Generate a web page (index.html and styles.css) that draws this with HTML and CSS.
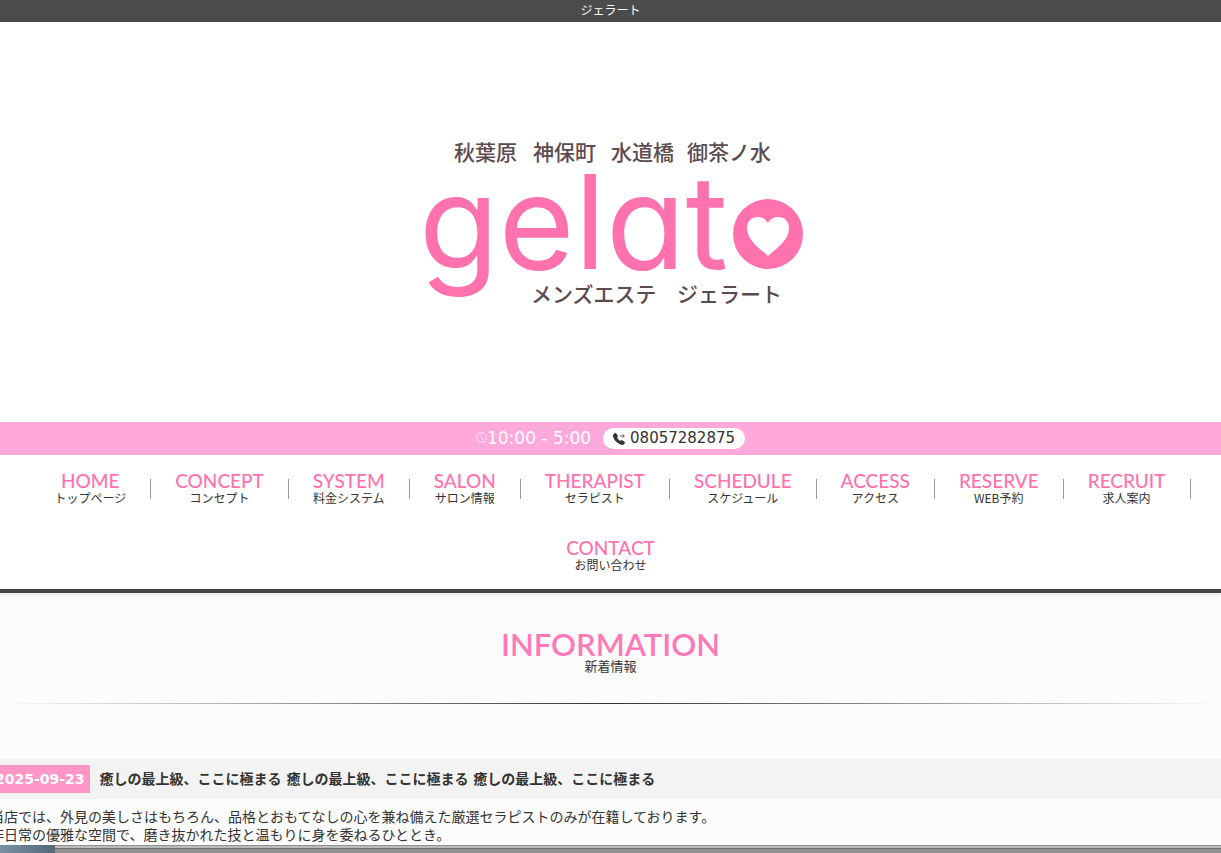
FILE: index.html
```html
<!DOCTYPE html>
<html lang="ja">
<head>
  <meta charset="UTF-8">
  <meta name="viewport" content="width=device-width, initial-scale=1">
  <title>ジェラート</title>
  <link rel="stylesheet" href="styles.css">
</head>
<body>
  <h1 class="site-title">ジェラート</h1>

  <header class="hero">
    <svg class="logo" width="400" height="200" viewBox="0 0 400 200">
      <g class="logo-ja">
        <text x="43" y="38">秋葉原</text>
        <text x="122" y="38">神保町</text>
        <text x="200" y="38">水道橋</text>
        <text x="276" y="38">御茶ノ水</text>
        <text x="120" y="180">メンズエステ</text>
        <text x="266" y="180">ジェラート</text>
      </g>
      <text class="logo-en" x="8" y="147">gelat</text>
      <circle cx="357" cy="112" r="35" fill="#ff72ae"/>
      <path d="M357 134C348 126 336 118 336 106C336 94 351 91 357 101C363 91 378 94 378 106C378 118 366 126 357 134Z" fill="#fff"/>
    </svg>
  </header>

  <div class="tel-bar">
    <span class="hours">
      <svg width="11" height="11" viewBox="0 0 16 16" fill="none" stroke="#fff"><circle cx="8" cy="8" r="7"/><path d="M8 3.5V9l3.5 2"/></svg>10:00 - 5:00
    </span>
    <a class="tel" href="tel:08057282875">
      <svg width="12" height="12" viewBox="0 0 16 16"><path d="M1.9.5a1.7 1.7 0 0 1 2.6.2L6 3c.3.5.4 1 .3 1.5l-.5 2c-.1.3 0 .5.2.7l2.8 2.8c.2.2.4.3.7.2l2-.5c.5-.1 1 0 1.5.3l2.3 1.5c.8.6.8 1.7.2 2.6l-1 1c-.8.8-1.9 1.1-3 .8C8.7 15 6 13.300 4 11.300S.8 6.800.1 4.500C-.3 3.400 0 2.300.8 1.500z"/><path d="M9 4h6M12.500 1.500L15 4l-2.500 2.500" fill="none" stroke="#333"/></svg>
      08057282875
    </a>
  </div>

  <nav class="gnav">
    <ul>
      <li><a href="#">HOME<span>トップページ</span></a></li>
      <li><a href="#">CONCEPT<span>コンセプト</span></a></li>
      <li><a href="#">SYSTEM<span>料金システム</span></a></li>
      <li><a href="#">SALON<span>サロン情報</span></a></li>
      <li><a href="#">THERAPIST<span>セラピスト</span></a></li>
      <li><a href="#">SCHEDULE<span>スケジュール</span></a></li>
      <li><a href="#">ACCESS<span>アクセス</span></a></li>
      <li><a href="#">RESERVE<span>WEB予約</span></a></li>
      <li><a href="#">RECRUIT<span>求人案内</span></a></li>
      <li><a href="#">CONTACT<span>お問い合わせ</span></a></li>
    </ul>
  </nav>

  <main>
    <h2 class="section-title">INFORMATION<span>新着情報</span></h2>
    <article class="news">
      <h3 class="news-head"><time datetime="2025-09-23">2025-09-23</time>癒しの最上級、ここに極まる 癒しの最上級、ここに極まる 癒しの最上級、ここに極まる</h3>
      <p>当店では、外見の美しさはもちろん、品格とおもてなしの心を兼ね備えた厳選セラピストのみが在籍しております。<br>非日常の優雅な空間で、磨き抜かれた技と温もりに身を委ねるひととき。</p>
      <div class="photo"><div class="photo-panel"></div></div>
    </article>
  </main>
</body>
</html>
```
FILE: styles.css
```css
* { box-sizing: border-box; }
body {
  margin: 0;
  background: #fcfcfc;
  color: #333;
  font-family: "DejaVu Sans", "Noto Sans CJK JP", sans-serif;
  font-size: 14px;
  line-height: 18px;
  overflow: hidden;
}
ul, h1, h2, h3, p { margin: 0; padding: 0; }
a { color: inherit; text-decoration: none; }

.site-title {
  background: #4b4b4b;
  color: #fff;
  font-size: 12px;
  font-weight: normal;
  line-height: 22px;
  text-align: center;
}

/* logo */
.hero {
  display: flex;
  justify-content: center;
  padding: 100px 0;
  background: #fff;
}
.logo-ja {
  font-family: "Noto Sans CJK JP", sans-serif;
  font-size: 21px;
  font-weight: 500;
  fill: #5c4b50;
}
.logo-en {
  font-family: Inter, sans-serif;
  font-size: 130px;
  font-feature-settings: "cv11";
  fill: #ff72ae;
}

/* hours and phone */
.tel-bar {
  display: flex;
  justify-content: center;
  align-items: center;
  gap: 12px;
  height: 33px;
  background: #ffa8dc;
}
.hours {
  display: flex;
  align-items: center;
  padding-bottom: 2px;
  color: #fff;
  font-size: 17px;
}
.tel {
  display: flex;
  align-items: center;
  gap: 5px;
  padding: 0 10px;
  border-radius: 11px;
  background: #fff;
  font-size: 15px;
  line-height: 21px;
}
.tel svg { fill: #333; }

/* navigation */
.gnav {
  background: #fff;
  border-bottom: 4px solid #444;
  box-shadow: 0 2px 4px rgba(0,0,0,0.1);
}
.gnav ul {
  display: flex;
  flex-wrap: wrap;
  justify-content: center;
  list-style: none;
}
.gnav li { display: flex; align-items: center; height: 67px; }
.gnav li:not(:last-child)::after {
  content: "";
  width: 1px;
  height: 20px;
  background: #999;
}
.gnav a {
  padding: 0 24px;
  color: #ff72ae;
  font-family: Lato, sans-serif;
  font-size: 19px;
  font-weight: 500;
  line-height: 18px;
  text-align: center;
}
.gnav span, .section-title span {
  display: block;
  color: #333;
  font-family: "Noto Sans CJK JP", sans-serif;
  font-size: 12px;
  font-weight: 400;
  line-height: 16px;
}

/* information */
.section-title {
  padding: 37px 0 29px;
  border-bottom: 1px solid;
  border-image: linear-gradient(90deg, #fcfcfc, #333, #fcfcfc) 1;
  color: #ff78b8;
  font-family: Lato, sans-serif;
  font-size: 31px;
  font-weight: 600;
  line-height: 28px;
  text-align: center;
}
.section-title span { font-size: 13px; }
.news { margin: 55px -10px 0; }
.news-head {
  display: flex;
  align-items: center;
  gap: 10px;
  padding: 6px 0;
  background: #f3f3f3;
  font-size: 14px;
  line-height: 28px;
}
.news-head time {
  padding: 0 5px;
  background: #ff96c8;
  color: #fff;
}
.news p { padding: 9px 0 1px; }
.photo { padding-left: 65px; background: linear-gradient(90deg, #8298ab, #54697a 65px); }
.photo-panel {
  height: 8px;
  border-top: 1px solid #929292;
  background: linear-gradient(#bbb 2px, #707070 2px, #707070 3px, #929292 3px);
}
```
